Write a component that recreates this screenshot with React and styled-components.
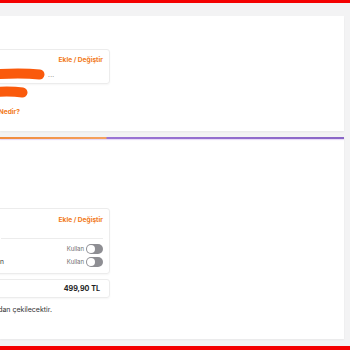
import React from "react";
import styled, { createGlobalStyle } from "styled-components";

const GlobalStyle = createGlobalStyle`
  html, body {
    margin: 0;
    padding: 0;
    background: #f3f3f4;
    overflow: hidden;
    font-family: "Inter", "Liberation Sans", sans-serif;
  }
`;

const Page = styled.div`
  width: 350px;
  height: 350px;
  display: flex;
  flex-direction: column;
  overflow: hidden;
`;

const RedBar = styled.div`
  height: ${(p) => p.$h}px;
  flex-shrink: 0;
  background: #f40000;
`;

const Panel = styled.section`
  background: #fff;
  margin: ${(p) => p.$top}px 6px 0 0;
  padding-top: ${(p) => p.$pad}px;
  height: ${(p) => p.$h}px;
  box-sizing: border-box;
  flex-shrink: 0;
  box-shadow: 0 1px 2px rgba(0, 0, 0, 0.05);
`;

const Progress = styled.div`
  height: 2px;
  margin-top: -${(p) => p.$pad}px;
  margin-bottom: ${(p) => p.$pad - 2}px;
  background: linear-gradient(
    to right,
    #f08a3c 0,
    #f5a25f 106px,
    #9b74d4 107px,
    #8a66c6 100%
  );
  box-shadow: 0 1px 1px rgba(180, 140, 230, 0.35);
`;

const Column = styled.div`
  width: 130px;
  margin-left: -20px;
  display: flex;
  flex-direction: column;
`;

const Card = styled.div`
  border: 1px solid #ececec;
  border-radius: 3px;
  box-shadow: 0 1px 2px rgba(0, 0, 0, 0.04);
  padding: 5px 6px ${(p) => p.$pb || 4}px 20px;
  margin-top: ${(p) => p.$mt || 0}px;
  display: flex;
  flex-direction: column;
`;

const Row = styled.div`
  display: flex;
  align-items: center;
  justify-content: ${(p) => p.$justify || "space-between"};
  height: ${(p) => p.$h || 10}px;
  margin-top: ${(p) => p.$mt || 0}px;
  padding-left: ${(p) => (p.$outside ? 21 : 0)}px;
  gap: 3px;
`;

const Clip = styled.div`
  width: ${(p) => p.$end}px;
  flex-shrink: 0;
  display: flex;
  justify-content: flex-end;
  align-items: center;
  white-space: nowrap;

  & > * {
    flex-shrink: 0;
  }
`;

const Link = styled.span`
  color: #f27a1a;
  font-size: 6.6px;
  font-weight: 700;
  white-space: nowrap;
`;

const Muted = styled.span`
  color: #6e6e6e;
  font-size: 6px;
  white-space: nowrap;
`;

const Note = styled.span`
  color: #333;
  font-size: ${(p) => p.$size || 6.4}px;
  white-space: nowrap;
`;

const Price = styled.span`
  color: #222;
  font-size: 7.2px;
  font-weight: 700;
`;

const Dots = styled.span`
  color: #666;
  font-size: 6.5px;
  letter-spacing: 0.3px;
  margin-top: 2px;
`;

const Options = styled.div`
  border-top: 1px solid #ececec;
  margin-top: 12px;
  padding-top: 3px;
`;

const UseGroup = styled.div`
  display: flex;
  align-items: center;
  gap: 2px;
`;

const Toggle = styled.span`
  width: 17px;
  height: 10px;
  border-radius: 5px;
  background: #8e8e93;
  position: relative;
  flex-shrink: 0;
  &::after {
    content: "";
    position: absolute;
    left: 1px;
    top: 1px;
    width: 8px;
    height: 8px;
    border-radius: 50%;
    background: #fff;
  }
`;

const PriceBox = styled.div`
  border: 1px solid #ececec;
  border-radius: 3px;
  box-shadow: 0 1px 2px rgba(0, 0, 0, 0.04);
  margin-top: 5px;
  height: 19px;
  box-sizing: border-box;
  display: flex;
  align-items: center;
  justify-content: flex-end;
  padding-right: 9px;
`;

function Scribble({ width }) {
  // the orange marker strokes that hide the card data
  const w = width + 30;
  return (
    <svg width={w} height="13" viewBox={`0 0 ${w} 13`}>
      <path
        d={`M0 8 Q ${w * 0.6} 4 ${w - 5.5} 6.5`}
        stroke="#fa5a0c"
        strokeWidth="10"
        strokeLinecap="round"
        fill="none"
      />
    </svg>
  );
}

export default function App() {
  return (
    <>
      <GlobalStyle />
      <Page>
        <RedBar $h={3} />
        <Panel $top={13} $pad={33} $h={115}>
          <Column>
            <Card>
              <Row $justify="flex-end">
                <Link>Ekle / Değiştir</Link>
              </Row>
              <Row $justify="flex-start" $mt={4}>
                <Clip $end={44}>
                  <Scribble width={44} />
                </Clip>
                <Dots>...</Dots>
              </Row>
            </Card>
            <Row $justify="flex-start" $mt={3} $h={11} $outside>
              <Clip $end={27}>
                <Scribble width={27} />
              </Clip>
            </Row>
            <Row $justify="flex-start" $mt={9} $outside>
              <Clip $end={19}>
                <Link>Puan Nedir?</Link>
              </Clip>
            </Row>
          </Column>
        </Panel>
        <Panel $top={6} $pad={71} $h={202}>
          <Progress $pad={71} />
          <Column>
            <Card $pb={5}>
              <Row $justify="flex-end" $h={12}>
                <Link>Ekle / Değiştir</Link>
              </Row>
              <Options>
                <Row $h={13}>
                  <span />
                  <UseGroup>
                    <Muted>Kullan</Muted>
                    <Toggle />
                  </UseGroup>
                </Row>
                <Row $h={13}>
                  <Clip $end={3}>
                    <Note $size={6.6}>Trendyol Cüzdan</Note>
                  </Clip>
                  <UseGroup>
                    <Muted>Kullan</Muted>
                    <Toggle />
                  </UseGroup>
                </Row>
              </Options>
            </Card>
            <PriceBox>
              <Price>499,90 TL</Price>
            </PriceBox>
            <Row $justify="flex-start" $mt={6} $outside>
              <Clip $end={51}>
                <Note $size={7}>Tutar Cüzdandan çekilecektir.</Note>
              </Clip>
            </Row>
          </Column>
        </Panel>
        <RedBar $h={10} style={{ marginTop: 7 }} />
      </Page>
    </>
  );
}
